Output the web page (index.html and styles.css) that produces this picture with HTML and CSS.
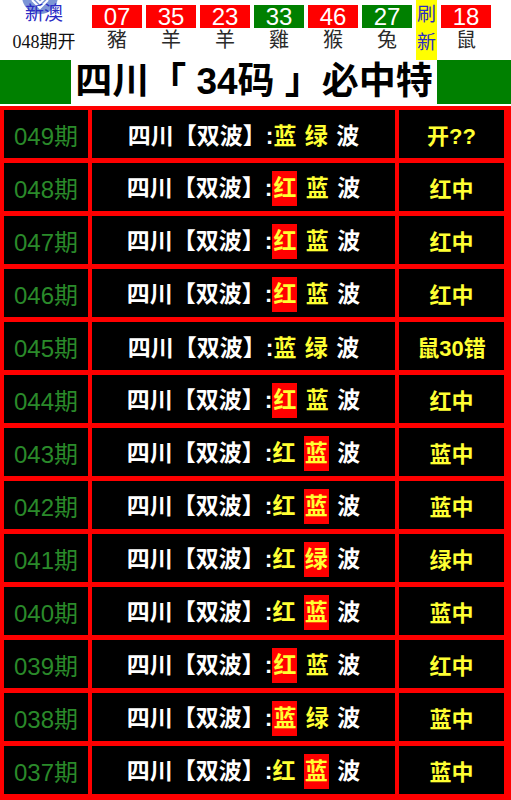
FILE: index.html
```html
<!DOCTYPE html>
<html lang="zh-CN">
<head>
  <meta charset="UTF-8">
  <meta name="viewport" content="width=device-width, initial-scale=1.0">
  <title>四川34码必中特</title>
  <link rel="stylesheet" href="styles.css">
</head>
<body>
  <!-- latest draw -->
  <div class="draw">
    <div class="brand">
      <div class="logo">
        <svg class="logo-disc" width="36" height="36" viewBox="0 0 36 36">
          <circle cx="18" cy="18" r="18" fill="#7c95d6"/>
          <path d="M10 22 L18 30 L26 22 M13 20 L18 25 L23 20" stroke="#fff" stroke-width="2" fill="none"/>
        </svg>
        <span class="logo-name">新澳</span>
      </div>
      <div class="issue">048期开</div>
    </div>
    <div class="balls">
      <div class="ball"><div class="num red">07</div><div class="zodiac">豬</div></div>
      <div class="ball"><div class="num red">35</div><div class="zodiac">羊</div></div>
      <div class="ball"><div class="num red">23</div><div class="zodiac">羊</div></div>
      <div class="ball"><div class="num green">33</div><div class="zodiac">雞</div></div>
      <div class="ball"><div class="num red">46</div><div class="zodiac">猴</div></div>
      <div class="ball"><div class="num green">27</div><div class="zodiac">兔</div></div>
      <div class="refresh">刷<br>新</div>
      <div class="ball"><div class="num red">18</div><div class="zodiac">鼠</div></div>
    </div>
  </div>

  <div class="title">
    <div class="title-side"></div>
    <h1 class="title-text">四川「 34码 」必中特</h1>
    <div class="title-side right"></div>
  </div>

  <!-- history -->
  <div class="record">
    <div class="cell period">049期</div>
    <div class="cell tip"><span>四川【双波】:<span class="y">蓝</span> <span class="y">绿</span> 波</span></div>
    <div class="cell result">开??</div>

    <div class="cell period">048期</div>
    <div class="cell tip"><span>四川【双波】:<span class="y hl">红</span> <span class="y">蓝</span> 波</span></div>
    <div class="cell result">红中</div>

    <div class="cell period">047期</div>
    <div class="cell tip"><span>四川【双波】:<span class="y hl">红</span> <span class="y">蓝</span> 波</span></div>
    <div class="cell result">红中</div>

    <div class="cell period">046期</div>
    <div class="cell tip"><span>四川【双波】:<span class="y hl">红</span> <span class="y">蓝</span> 波</span></div>
    <div class="cell result">红中</div>

    <div class="cell period">045期</div>
    <div class="cell tip"><span>四川【双波】:<span class="y">蓝</span> <span class="y">绿</span> 波</span></div>
    <div class="cell result">鼠30错</div>

    <div class="cell period">044期</div>
    <div class="cell tip"><span>四川【双波】:<span class="y hl">红</span> <span class="y">蓝</span> 波</span></div>
    <div class="cell result">红中</div>

    <div class="cell period">043期</div>
    <div class="cell tip"><span>四川【双波】:<span class="y">红</span> <span class="y hl">蓝</span> 波</span></div>
    <div class="cell result">蓝中</div>

    <div class="cell period">042期</div>
    <div class="cell tip"><span>四川【双波】:<span class="y">红</span> <span class="y hl">蓝</span> 波</span></div>
    <div class="cell result">蓝中</div>

    <div class="cell period">041期</div>
    <div class="cell tip"><span>四川【双波】:<span class="y">红</span> <span class="y hl">绿</span> 波</span></div>
    <div class="cell result">绿中</div>

    <div class="cell period">040期</div>
    <div class="cell tip"><span>四川【双波】:<span class="y">红</span> <span class="y hl">蓝</span> 波</span></div>
    <div class="cell result">蓝中</div>

    <div class="cell period">039期</div>
    <div class="cell tip"><span>四川【双波】:<span class="y hl">红</span> <span class="y">蓝</span> 波</span></div>
    <div class="cell result">红中</div>

    <div class="cell period">038期</div>
    <div class="cell tip"><span>四川【双波】:<span class="y hl">蓝</span> <span class="y">绿</span> 波</span></div>
    <div class="cell result">蓝中</div>

    <div class="cell period">037期</div>
    <div class="cell tip"><span>四川【双波】:<span class="y">红</span> <span class="y hl">蓝</span> 波</span></div>
    <div class="cell result">蓝中</div>
  </div>
</body>
</html>
```

FILE: styles.css
```css
body {
  margin: 0;
  background: #fff;
  font-family: "Liberation Sans", "Noto Sans CJK SC", sans-serif;
  overflow: hidden;
}

/* top draw strip */
.draw {
  display: flex;
  gap: 4px;
  height: 60px;
}

.brand {
  width: 88px;
  display: flex;
  flex-direction: column;
  align-items: center;
}

.logo {
  position: relative;
  height: 30px;
  width: 88px;
  text-align: center;
  overflow: hidden;
}

.logo-disc {
  position: absolute;
  left: 22px;
  top: -22px;
}

.logo-name {
  position: relative;
  display: block;
  margin-top: 4px;
  font-size: 19px;
  line-height: 20px;
  color: #2b2bc4;
}

.issue {
  font-family: "Liberation Serif", "Noto Sans CJK SC", serif;
  font-size: 18px;
  line-height: 24px;
  color: #111;
}

.balls {
  display: flex;
  gap: 4px;
}

.ball {
  width: 50px;
  text-align: center;
}

.num {
  margin-top: 5px;
  height: 23px;
  line-height: 24px;
  font-size: 24px;
  color: #fff;
}

.num.red {
  background: #ff0000;
}

.num.green {
  background: #008000;
}

.zodiac {
  font-size: 20px;
  line-height: 24px;
  color: #2a2a2a;
}

.refresh {
  width: 21px;
  background: #ffff00;
  color: #2b2bc4;
  font-size: 19px;
  line-height: 28px;
  text-align: center;
  padding-top: 1px;
}

/* title bar */
.title {
  display: flex;
  height: 44px;
  margin-bottom: 2px;
}

.title-side {
  width: 71px;
  background: #008000;
}

.title-side.right {
  width: 74px;
}

.title-text {
  flex: 1;
  margin: 0;
  font-size: 37px;
  line-height: 44px;
  text-align: center;
  white-space: nowrap;
  color: #000;
}

/* history table */
.record {
  display: grid;
  grid-template-columns: 84px 303px 1fr;
  grid-auto-rows: 48px;
  gap: 5px 4px;
  padding: 4px 7px 6px 4px;
  background: #ff0000;
}

.cell {
  background: #000;
  display: flex;
  align-items: center;
  justify-content: center;
  white-space: nowrap;
}

.period {
  font-size: 24px;
  color: #2a8a2a;
}

.tip {
  font-size: 23px;
  font-weight: bold;
  color: #fff;
  word-spacing: 2px;
}

.tip .y {
  color: #ffff33;
}

.tip .hl {
  display: inline-block;
  background: #ff0000;
  line-height: 35px;
  padding: 0 1px;
}

.result {
  font-size: 22px;
  font-weight: bold;
  color: #ffff33;
}
```
